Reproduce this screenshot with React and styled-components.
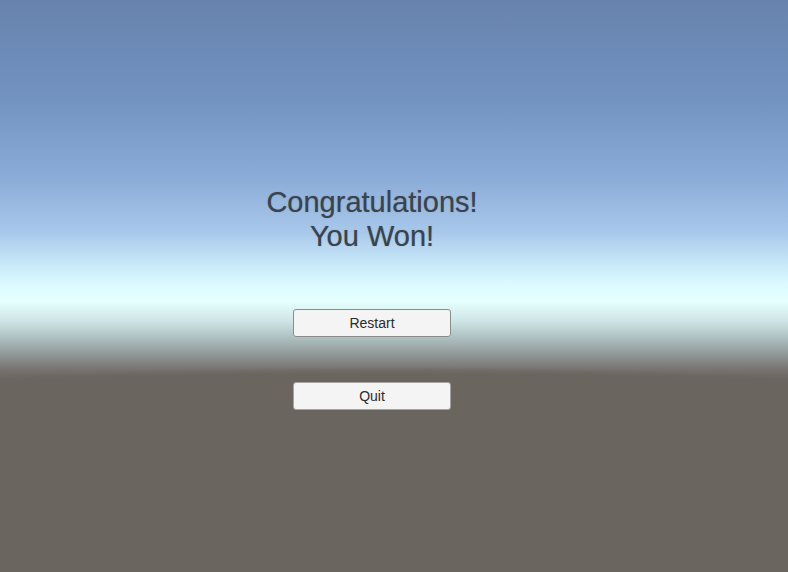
import React from "react";
import styled, { createGlobalStyle } from "styled-components";

const GlobalStyle = createGlobalStyle`
  html, body, #root {
    margin: 0;
    height: 100%;
  }
  body {
    font-family: "Liberation Sans", Arial, sans-serif;
    overflow: hidden;
  }
`;

// skybox: curved ground on top of the sky gradient
const Scene = styled.div`
  box-sizing: border-box;
  height: 100%;
  display: flex;
  flex-direction: column;
  align-items: center;
  padding: 185px 44px 0 0;
  background:
    radial-gradient(
      1400px 200px at 50% 567px,
      #6b6560 0%,
      #6b6560 96.5%,
      rgba(107, 101, 96, 0) 100%
    ),
    linear-gradient(
      to bottom,
      #6783ad 0px,
      #7292c0 100px,
      #8aabd7 175px,
      #a6c6ea 230px,
      #c6e6f8 262px,
      #ddfafe 285px,
      #e4fffd 302px,
      #cde4e4 322px,
      #a6b6b6 342px,
      #8a8f8e 358px,
      #76726f 370px,
      #6b6560 380px,
      #67615c 572px
    );
`;

const Title = styled.h1`
  margin: 0 0 56px;
  font-size: 29px;
  line-height: 34px;
  font-weight: normal;
  text-align: center;
  color: #3b434c;
  text-shadow: 0 0 1px rgba(59, 67, 76, 0.5);
`;

const Menu = styled.div`
  display: flex;
  flex-direction: column;
  gap: 45px;
`;

const MenuButton = styled.button`
  box-sizing: border-box;
  width: 158px;
  height: 28px;
  padding: 0;
  border: 1px solid ${(props) => (props.$muted ? "#a5a3a1" : "#8c8c8c")};
  border-radius: 3px;
  background: #f4f4f4;
  color: #2b2b2b;
  font-family: "Liberation Sans", Arial, sans-serif;
  font-size: 14px;
  cursor: pointer;
`;

function App() {
  return (
    <>
      <GlobalStyle />
      <Scene>
        <Title>
          Congratulations!
          <br />
          You Won!
        </Title>
        <Menu>
          <MenuButton>Restart</MenuButton>
          <MenuButton $muted>Quit</MenuButton>
        </Menu>
      </Scene>
    </>
  );
}

export default App;
